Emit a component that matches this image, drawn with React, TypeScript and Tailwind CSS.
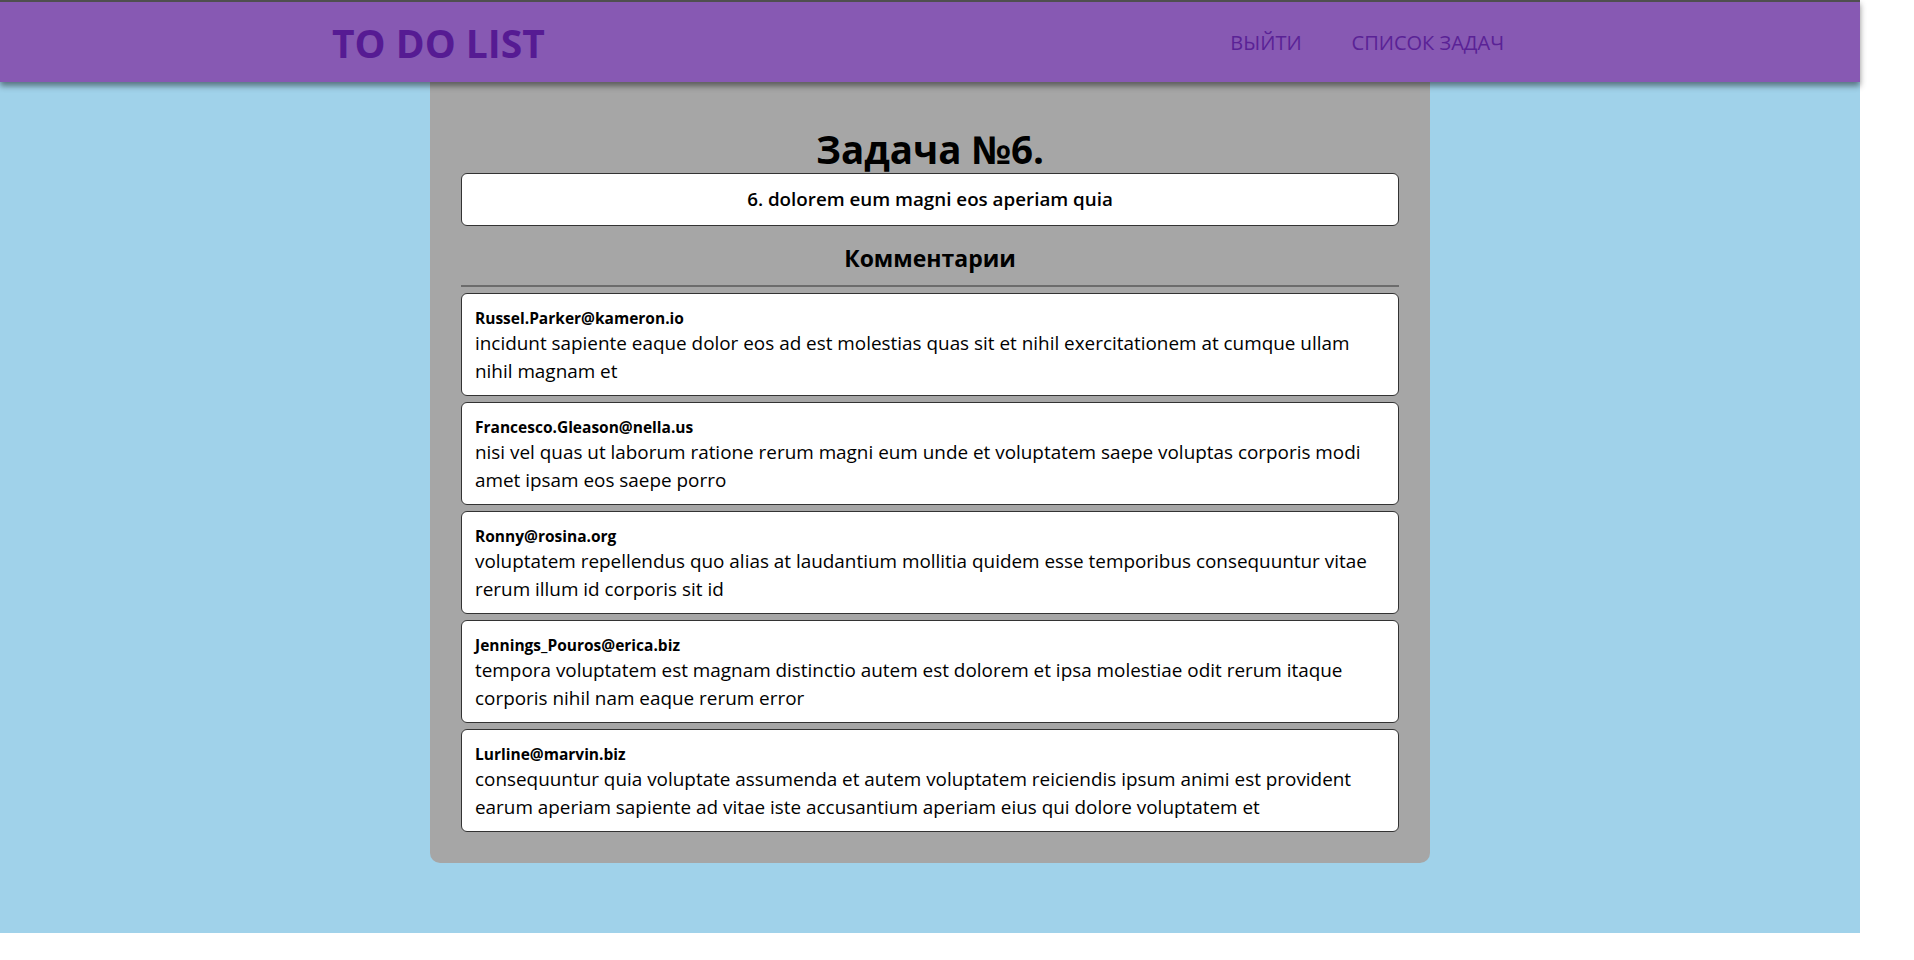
const comments = [
  {
    email: "Russel.Parker@kameron.io",
    body: "incidunt sapiente eaque dolor eos ad est molestias quas sit et nihil exercitationem at cumque ullam nihil magnam et",
  },
  {
    email: "Francesco.Gleason@nella.us",
    body: "nisi vel quas ut laborum ratione rerum magni eum unde et voluptatem saepe voluptas corporis modi amet ipsam eos saepe porro",
  },
  {
    email: "Ronny@rosina.org",
    body: "voluptatem repellendus quo alias at laudantium mollitia quidem esse temporibus consequuntur vitae rerum illum id corporis sit id",
  },
  {
    email: "Jennings_Pouros@erica.biz",
    body: "tempora voluptatem est magnam distinctio autem est dolorem et ipsa molestiae odit rerum itaque corporis nihil nam eaque rerum error",
  },
  {
    email: "Lurline@marvin.biz",
    body: "consequuntur quia voluptate assumenda et autem voluptatem reiciendis ipsum animi est provident earum aperiam sapiente ad vitae iste accusantium aperiam eius qui dolore voluptatem et",
  },
]

export default function App() {
  return (
    <div className="w-[1860px] h-[933px] bg-[#a0d2ea] font-['Open_Sans',sans-serif] text-black">
      {/* Header */}
      <header className="relative z-10 h-[82px] border-t-2 border-[#4f4f4f] bg-[#8759b3] shadow-[0_4px_6px_rgba(0,0,0,0.45)] flex items-center pl-[332px] pr-[356px]">
        <h1 className="text-[39px] font-bold leading-none text-[#561b93]">TO DO LIST</h1>
        <nav className="ml-auto pt-[2px] flex gap-[50px] text-[20px] uppercase text-[#5a2296]">
          <a>Выйти</a>
          <a>Список задач</a>
        </nav>
      </header>

      {/* Task panel */}
      <main className="w-[1000px] mx-auto bg-[#a6a6a6] rounded-b-[10px] px-[31px] pt-[43px] pb-[31px]">
        <h2 className="text-center text-[38.5px] font-bold leading-[48px]">Задача №6.</h2>
        <div className="bg-white border border-[#333] rounded-[6px] py-[12px] text-center text-[18.8px] leading-[27px] font-semibold">
          6. dolorem eum magni eos aperiam quia
        </div>
        <h3 className="mt-[16px] text-center text-[23px] font-bold leading-[32px]">Комментарии</h3>
        <div className="mt-[11px] h-[2px] bg-[#6c6c6c]" />

        <div className="mt-[6px] flex flex-col gap-[6px]">
          {comments.map((c) => (
            <div key={c.email} className="bg-white border border-[#333] rounded-[6px] px-[13px] pt-[14px] pb-[10px]">
              <div className="text-[15.5px] font-bold leading-[21px]">{c.email}</div>
              <p className="text-[18.9px] leading-[28px]">{c.body}</p>
            </div>
          ))}
        </div>
      </main>
    </div>
  )
}
